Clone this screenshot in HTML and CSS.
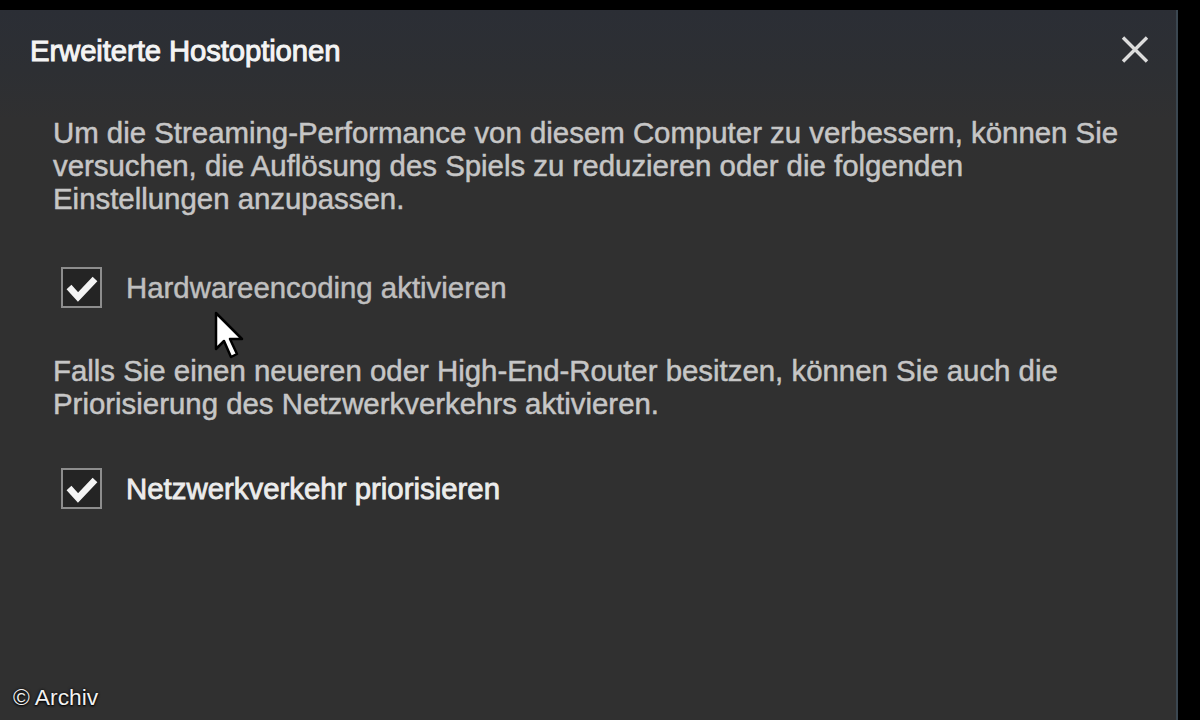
FILE: index.html
```html
<!DOCTYPE html>
<html lang="de">
<head>
<meta charset="utf-8">
<title>Erweiterte Hostoptionen</title>
<link rel="stylesheet" href="styles.css">
</head>
<body>
<div class="screen">
  <div class="dialog">
    <div class="header">
      <div class="title">Erweiterte Hostoptionen</div>
      <div class="close" aria-label="Schließen">
        <svg width="28" height="27" viewBox="0 0 28 27"><path d="M2 1.5 L26 25.5 M26 1.5 L2 25.5" stroke="#dcdcdc" stroke-width="3.4" fill="none"/></svg>
      </div>
    </div>
    <div class="content">
      <p class="para para-first">Um die Streaming-Performance von diesem Computer zu verbessern, können Sie versuchen, die Auflösung des Spiels zu reduzieren oder die folgenden Einstellungen anzupassen.</p>
      <div class="option option-first">
        <span class="box"><svg width="36" height="36" viewBox="0 0 36 36"><path d="M5 17 L14 27 L31 9" stroke="#f4f4f4" stroke-width="6.5" fill="none" stroke-linejoin="miter"/></svg></span>
        <span class="label">Hardwareencoding aktivieren</span>
      </div>
      <p class="para para-second">Falls Sie einen neueren oder High-End-Router besitzen, können Sie auch die Priorisierung des Netzwerkverkehrs aktivieren.</p>
      <div class="option option-second">
        <span class="box"><svg width="36" height="36" viewBox="0 0 36 36"><path d="M5 17 L14 27 L31 9" stroke="#f4f4f4" stroke-width="6.5" fill="none" stroke-linejoin="miter"/></svg></span>
        <span class="label label-bright">Netzwerkverkehr priorisieren</span>
      </div>
    </div>
  </div>
  <svg class="cursor" width="36" height="56" viewBox="0 0 36 56"><path d="M2 2 L2 38 L10 30 L17 46 L23 43 L16 28 L28 28 Z" fill="#ffffff" stroke="#000000" stroke-width="2.5" stroke-linejoin="round"/></svg>
  <div class="credit">© Archiv</div>
</div>
</body>
</html>
```

FILE: styles.css
```css
html, body {
  margin: 0;
  padding: 0;
  background: #000;
}
.screen {
  position: relative;
  width: 1200px;
  height: 720px;
  overflow: hidden;
  background: #000;
  font-family: "Liberation Sans", Arial, sans-serif;
}
.dialog {
  margin-top: 10px;
  width: 1176px;
  height: 710px;
  border-right: 2px solid #3b4751;
  background: linear-gradient(to bottom, #2b2e35 0px, #2d2f33 60px, #303031 110px, #303030 160px);
  display: flex;
  flex-direction: column;
}
.header {
  display: flex;
  align-items: center;
  justify-content: space-between;
  padding: 24px 27px 0 30px;
}
.title {
  font-size: 29.3px;
  line-height: 33px;
  color: #f4f4f4;
  -webkit-text-stroke: 1px #f4f4f4;
  letter-spacing: -0.1px;
}
.close {
  display: flex;
  width: 28px;
  height: 27px;
  margin-top: -3px;
}
.content {
  padding: 49px 40px 0 53px;
  display: flex;
  flex-direction: column;
}
.para {
  margin: 0;
  font-size: 29.4px;
  line-height: 33px;
  color: #c6c6c6;
  -webkit-text-stroke: 0.5px #c6c6c6;
}
.option {
  display: flex;
  align-items: center;
  gap: 24px;
  padding-left: 8px;
}
.option-first {
  margin-top: 52px;
}
.para-second {
  margin-top: 46px;
}
.option-second {
  margin-top: 48px;
}
.box {
  box-sizing: border-box;
  width: 41px;
  height: 41px;
  border: 2.5px solid #8d8d8d;
  background: #242424;
  display: flex;
  align-items: center;
  justify-content: center;
}
.label {
  font-size: 29.4px;
  line-height: 33px;
  color: #bfbfbf;
  -webkit-text-stroke: 0.5px #bfbfbf;
}
.label-bright {
  color: #ececec;
  -webkit-text-stroke: 0.8px #ececec;
}
.cursor {
  position: absolute;
  left: 214px;
  top: 311px;
}
.credit {
  position: absolute;
  left: 13px;
  top: 684px;
  font-size: 22.8px;
  line-height: 26px;
  color: #f2f2f2;
  text-shadow: 0 0 3px #000, 0 1px 2px #000;
}
```
